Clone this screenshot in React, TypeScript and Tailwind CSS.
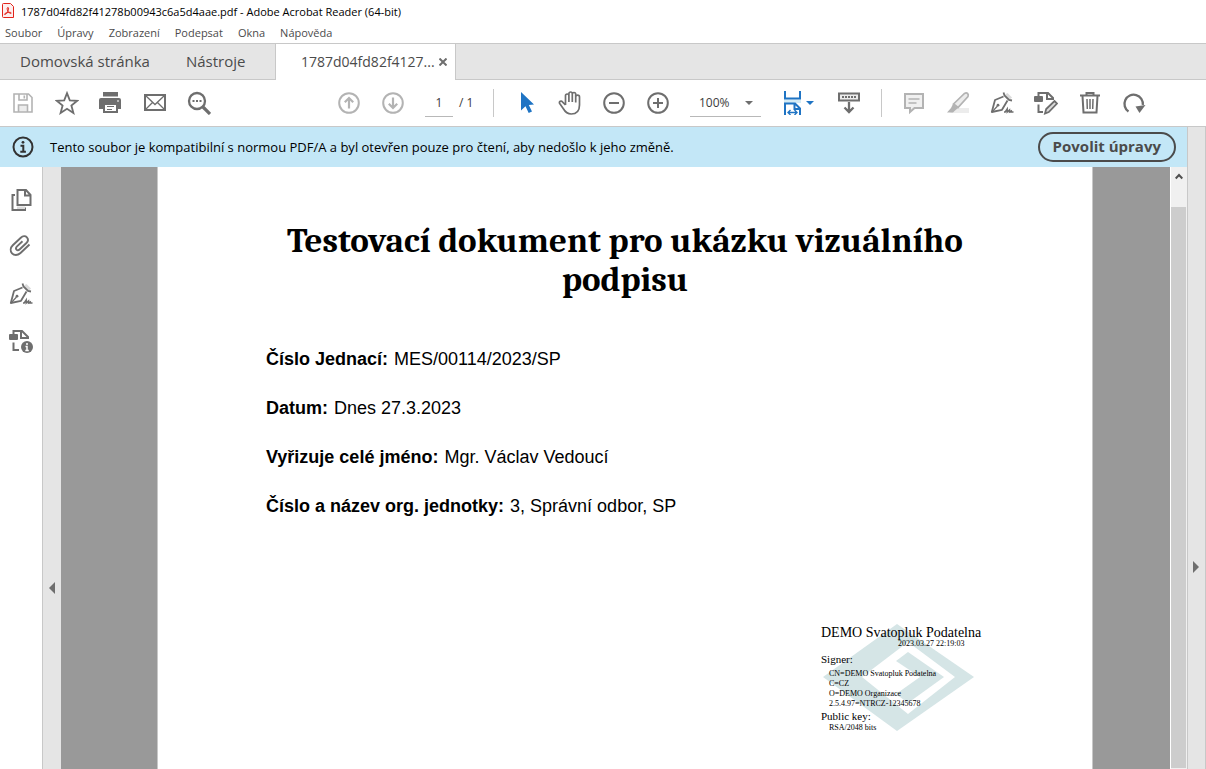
import { useState } from "react";
import type { ReactNode } from "react";

const MENU = ["Soubor", "Úpravy", "Zobrazení", "Podepsat", "Okna", "Nápověda"];

const FIELDS = [
  { label: "Číslo Jednací:", value: "MES/00114/2023/SP" },
  { label: "Datum:", value: "Dnes 27.3.2023" },
  { label: "Vyřizuje celé jméno:", value: "Mgr. Václav Vedoucí" },
  { label: "Číslo a název org. jednotky:", value: "3, Správní odbor, SP" },
];

const CERT_LINES = ["CN=DEMO Svatopluk Podatelna", "C=CZ", "O=DEMO Organizace", "2.5.4.97=NTRCZ-12345678"];

function Icon({ children, className = "" }: { children: ReactNode; className?: string }) {
  return (
    <svg className={`w-6 h-6 shrink-0 ${className}`} viewBox="0 0 24 24" fill="none" stroke="currentColor" strokeWidth={2}>
      {children}
    </svg>
  );
}

function ToolButton({ label, disabled, children }: { label: string; disabled?: boolean; children: ReactNode }) {
  return (
    <button
      type="button"
      aria-label={label}
      disabled={disabled}
      className="flex w-11 h-full shrink-0 items-center justify-center text-[#6e6e6e] disabled:text-[#b3b3b3]"
    >
      <Icon>{children}</Icon>
    </button>
  );
}

function SignShape() {
  return (
    <>
      <path d="M15 3.5l2.500-1.500L22 6.500 19.500 9z" fill="#dcdcdc" stroke="none" />
      <path d="M13.500 1.500l1 3 4.500 4.500 3 .5" strokeWidth={1.800} />
      <path d="M13.500 5.500l-8.500 3.500L1.800 21l10.200-2.200L17.500 9.500" strokeWidth={1.800} strokeLinejoin="round" />
      <path d="M2 21l5.500-6" strokeWidth={1.200} />
      <circle cx="8" cy="14.200" r="1.400" fill="currentColor" stroke="none" />
      <path d="M14 21h1.200l2-3v3l2.300-2v2l1.800-1v1H23.500" strokeWidth={1.500} />
    </>
  );
}

function Toolbar() {
  const [page, setPage] = useState("1");

  return (
    <div className="flex h-[47px] shrink-0 items-center border-b border-[#c8c8c8] bg-white pl-px">
      <ToolButton label="Uložit" disabled>
        <path d="M7 14h10v7H7z" fill="#ececec" stroke="none" />
        <path d="M3 3h14.5L21 6.5V21H3zM8 3v6h8V3M7.500 21v-7h9v7" strokeWidth={1.6} />
        <path d="M13.300 4.500v3" strokeWidth={1.6} />
      </ToolButton>
      <ToolButton label="Oblíbené">
        <path d="M12 2.200l2.800 7.200 7.400.4-5.800 4.800 2 7.400-6.400-4.200L5.600 22l2-7.400-5.800-4.800 7.400-.4z" strokeWidth={1.8} />
      </ToolButton>
      <ToolButton label="Tisk">
        <path d="M4 1h15v4.500H4z" fill="currentColor" stroke="none" />
        <path d="M0 9a2 2 0 012-2h18a2 2 0 012 2v9h-3v4H4v-4H0z" fill="currentColor" stroke="none" />
        <path d="M6 14h11v6H6z" fill="white" stroke="none" />
        <path d="M8 15.500h7M8 18.500h5" strokeWidth={1.200} />
        <path d="M18 10h2" stroke="white" strokeWidth={1.200} />
      </ToolButton>
      <ToolButton label="E-mail">
        <path d="M2 4h20v15H2z" />
        <path d="M2.500 4.500L12 13.500l9.500-9M2.500 18.500l7-7M21.500 18.500l-7-7" strokeWidth={1.300} />
      </ToolButton>
      <ToolButton label="Hledat">
        <circle cx="10" cy="10" r="8" strokeWidth={2.300} />
        <path d="M16 16l7 7" strokeWidth={3.200} />
        <path d="M5.500 10h2M9 10h2M12.500 10h2" />
      </ToolButton>

      <div className="ml-[106px] flex h-full items-center">
        <ToolButton label="Předchozí stránka" disabled>
          <circle cx="12" cy="12" r="9.800" />
          <path d="M12 17.500V7.500M7.800 11.200L12 7l4.200 4.200" strokeWidth={2.200} />
        </ToolButton>
        <ToolButton label="Další stránka" disabled>
          <circle cx="12" cy="12" r="9.800" />
          <path d="M12 6.500v10M7.800 12.800L12 17l4.200-4.200" strokeWidth={2.200} />
        </ToolButton>
      </div>

      <input
        aria-label="Stránka"
        value={page}
        onChange={(e) => setPage(e.target.value)}
        className="ml-[10px] h-7 w-7 border-b border-[#b8b8b8] text-center text-xs text-[#3c3c3c] outline-none"
      />
      <span className="ml-1.5 w-[34px] text-xs text-[#3c3c3c]">/ 1</span>
      <div className="h-7 w-px bg-[#c8c8c8]" />

      <div className="ml-[10px] flex h-full items-center">
        <ToolButton label="Výběr">
          <path d="M7 1v18.500l4.500-4.300 3.200 6.800 3.300-1.500-3.200-6.500 5.200-.5z" fill="#1f74c4" stroke="none" />
        </ToolButton>
        <ToolButton label="Ruka">
          <path
            d="M7.500 14V4.700a1.700 1.700 0 013.400 0V11M10.900 11V2.700a1.700 1.700 0 013.400 0V11M14.300 11V3.200a1.700 1.700 0 013.400 0V11.500M17.700 11.500V6a1.900 1.900 0 013.800 0V14c0 5.500-3 9-8.300 9-4.200 0-6-2-8-5.500L1.700 12.500c-1-2 1.500-3.200 2.700-1.700L7.500 14"
            strokeWidth={1.700}
            strokeLinejoin="round"
          />
        </ToolButton>
        <ToolButton label="Zmenšit">
          <circle cx="12" cy="12" r="9.800" />
          <path d="M7 12h10" />
        </ToolButton>
        <ToolButton label="Zvětšit">
          <circle cx="12" cy="12" r="9.800" />
          <path d="M7 12h10M12 7v10" />
        </ToolButton>
      </div>

      <div className="relative ml-[10px]">
        <select
          aria-label="Přiblížení"
          defaultValue="100%"
          className="h-7 w-[71px] appearance-none border-b border-[#b8b8b8] bg-transparent pl-[9px] text-xs text-[#3c3c3c]"
        >
          <option>50%</option>
          <option>100%</option>
          <option>200%</option>
        </select>
        <svg className="pointer-events-none absolute right-2 top-3 h-1 w-2" viewBox="0 0 8 4" fill="#6e6e6e">
          <path d="M0 0h8L4 4z" />
        </svg>
      </div>

      <button type="button" aria-label="Přizpůsobit šířce" className="ml-[19px] flex h-full w-9 shrink-0 items-center gap-0.5 text-[#1f74c4]">
        <Icon>
          <path d="M4 8.500h17v3.500H4z" fill="#d4ebf5" stroke="none" />
          <path d="M5 0v7.500h15V0" />
          <path d="M5 24V12.500h10l5 5V24M14.500 13v5H20" />
          <path d="M8 21.500h9M10.500 19l-2.500 2.500 2.500 2.500M14.500 19l2.500 2.500-2.500 2.500" strokeWidth={1.400} />
        </Icon>
        <svg className="h-1 w-2 shrink-0" viewBox="0 0 8 4" fill="currentColor">
          <path d="M0 0h8L4 4z" />
        </svg>
      </button>
      <div className="ml-[11px] flex h-full items-center">
        <ToolButton label="Lišta nástrojů">
          <path d="M2 2.500h20v7H2z" fill="#ececec" />
          <path d="M5 6h14" strokeDasharray="2 1" />
          <path d="M12 11v9.500M7.500 16.500l4.500 4.500 4.500-4.500" strokeWidth={2.300} />
        </ToolButton>
      </div>
      <div className="ml-[10px] h-7 w-px bg-[#c8c8c8]" />

      <div className="ml-[10px] flex h-full items-center">
        <ToolButton label="Poznámka" disabled>
          <path d="M3 3h18v14h-8.500L8 21v-4H3z" fill="#f0f0f0" />
          <path d="M6.500 8h11M6.500 12h8" strokeWidth={1.300} />
        </ToolButton>
        <ToolButton label="Zvýraznit" disabled>
          <path d="M9 17h14v5H4z" fill="#ececec" stroke="none" />
          <path d="M7.500 13L18.500 2.500c2.500-1.500 4.500.5 3.500 3L12 16.500z" fill="#ececec" strokeWidth={1.700} />
          <path d="M7 13l5 4-3.500 3L7 21.500H1L5 17z" fill="currentColor" stroke="none" />
        </ToolButton>
        <ToolButton label="Podepsat">
          <SignShape />
        </ToolButton>
        <ToolButton label="Upravit PDF">
          <path d="M0 6a1 1 0 011-1h7a1 1 0 011 1v4a1 1 0 01-1 1H1a1 1 0 01-1-1z" fill="currentColor" stroke="none" />
          <path d="M4.500 5V2h9.500l5 5v2M13 2v6h6M4.500 13.500V21H9" />
          <path d="M11 22.500l1.200-4.500L20.500 10l2.500 2.500-8.200 8.500z" fill="#dcdcdc" strokeWidth={1.800} />
        </ToolButton>
        <ToolButton label="Odstranit">
          <path d="M2 4.500h20M8.500 4V2h7v2M4.500 5l1 16.500h13l1-16.500" />
          <path d="M9 8l.3 10M12 8v10M15 8l-.3 10" strokeWidth={1.500} />
        </ToolButton>
        <ToolButton label="Otočit">
          <path d="M6.500 20.500a9.200 9.200 0 1114.300-6.500" strokeWidth={2.300} />
          <path d="M13.500 15.500l10-1.500-6 8z" fill="currentColor" stroke="none" />
        </ToolButton>
      </div>
    </div>
  );
}

function Sidebar() {
  return (
    <aside className="flex w-[42px] shrink-0 flex-col items-center gap-[23px] bg-white pr-px pt-[21px] text-[#6e6e6e]">
      <button type="button" aria-label="Miniatury stránek">
        <Icon>
          <path d="M8.500 2H17l4.500 5v10h-13zM16 2v5.500h5.500" />
          <path d="M6 7H3.500v15H16v-2.500" />
          <path d="M8 18.500h8V21H8z" fill="#dcdcdc" stroke="none" />
        </Icon>
      </button>
      <button type="button" aria-label="Přílohy">
        <Icon>
          <path
            d="M20.500 9.500l-9 8.500c-3 2.800-6.500 2.500-8.500.3-2-2.300-1.700-5.600.8-8l8-7.600c2-1.800 4.600-2 6.100-.4 1.500 1.700 1.300 3.900-.5 5.700l-6.600 6.300c-1.200 1.100-2.500 1.200-3.300.4-.8-.9-.6-2.200.5-3.300l5.500-5.200"
            strokeWidth={1.900}
          />
        </Icon>
      </button>
      <button type="button" aria-label="Podpisy">
        <Icon>
          <SignShape />
        </Icon>
      </button>
      <button type="button" aria-label="Standardy">
        <Icon>
          <path d="M0 6a1 1 0 011-1h7a1 1 0 011 1v4a1 1 0 01-1 1H1a1 1 0 01-1-1z" fill="currentColor" stroke="none" />
          <path d="M4.500 5V2h8.500l6 6v2M12 2v7h6.500M4.500 13.500V21H10" />
          <circle cx="18" cy="18" r="6" fill="currentColor" stroke="none" />
          <path d="M18 14v2M16.500 17.500H18v4M16.300 21.500h3.500" stroke="white" strokeWidth={1.500} />
        </Icon>
      </button>
    </aside>
  );
}

function Signature() {
  return (
    <div className="relative isolate ml-auto mr-[5px] w-[158px] whitespace-nowrap pt-px font-['Liberation_Serif',serif] text-black">
      <svg className="absolute left-0 top-0 -z-10 h-[108px] w-[154px]" viewBox="0 0 154 108" fill="#d5e5e6">
        <path fillRule="evenodd" d="M2 53L76 0l77 53-77 54zM41 53l46 37 47-37-47-35z" />
        <path d="M75 37l12-9 36 25-36 26-12-9 24-17z" />
      </svg>
      <div className="text-[14px] leading-4">DEMO Svatopluk Podatelna</div>
      <div className="pl-[77px] text-[8px] leading-[6px]">2023.03.27 22:19:03</div>
      <div className="mt-[5px] text-[11px] leading-[14px]">Signer:</div>
      <div className="mt-[3px] pl-2 text-[8px] leading-[10px]">
        {CERT_LINES.map((line) => (
          <div key={line}>{line}</div>
        ))}
      </div>
      <div className="text-[11px] leading-[14px]">Public key:</div>
      <div className="pl-2 text-[8px] leading-[10px]">RSA/2048 bits</div>
    </div>
  );
}

export default function App() {
  return (
    <div className="flex min-h-screen flex-col bg-white font-['Open_Sans',sans-serif] text-[#4b4b4b]">
      <header className="flex h-[22px] shrink-0 items-center gap-[7px] pl-0.5">
        <svg className="h-4 w-3" viewBox="0 0 12 16" fill="none" stroke="#e2231a">
          <path d="M1.500.500h7l3 3v11h-10a1 1 0 01-1-1v-12a1 1 0 011-1z" fill="#fdeeee" />
          <path d="M6 4.500c1.200 0 .3 3.500-1.200 5.500-1 1.500-2.300 2-2.400 1.200-.1-.9 3.600-2 5.500-1.900 1.500.1 1.800 1.300.7 1.200C7 10.400 4.800 7 5.200 5.200c.1-.5.400-.7.800-.7z" />
        </svg>
        <h1 className="pt-0.5 text-[11px] text-black">1787d04fd82f41278b00943c6a5d4aae.pdf - Adobe Acrobat Reader (64-bit)</h1>
      </header>

      <nav className="flex h-[21px] shrink-0 items-center gap-[15px] pl-[5px] pt-0.5 text-[11px]">
        {MENU.map((item) => (
          <button key={item} type="button">
            {item}
          </button>
        ))}
      </nav>

      <div className="flex h-[37px] shrink-0 border-t border-[#c8c8c8] bg-[#e5e5e5] text-[15px]">
        <div className="flex w-[276px] items-center gap-9 border-b border-r border-[#c8c8c8] pl-5">
          <button type="button">Domovská stránka</button>
          <button type="button">Nástroje</button>
        </div>
        <div className="flex w-[179px] items-center gap-1 bg-white pl-[25px]">
          <button type="button" className="text-sm">
            1787d04fd82f4127...
          </button>
          <button type="button" aria-label="Zavřít kartu">
            <svg className="h-2 w-2" viewBox="0 0 8 8" stroke="#6e6e6e" strokeWidth={2}>
              <path d="M.500.500l7 7M7.500.500l-7 7" />
            </svg>
          </button>
        </div>
        <div className="flex-1 border-b border-l border-[#c8c8c8]" />
      </div>

      <Toolbar />

      <div className="flex flex-1">
        <div className="flex min-w-0 flex-1 flex-col">
          <div className="flex h-10 shrink-0 items-center bg-[#c3e7f7] pl-[11px] pr-[11px]">
            <Icon className="text-[#323232]">
              <circle cx="12" cy="12" r="9.500" />
              <circle cx="12" cy="7.300" r="1.400" fill="currentColor" stroke="none" />
              <path d="M9.500 10.800H12.300V16.500M9.300 16.700h5.600" />
            </Icon>
            <p className="ml-[15px] flex-1 pt-px text-[13px] text-black">
              Tento soubor je kompatibilní s normou PDF/A a byl otevřen pouze pro čtení, aby nedošlo k jeho změně.
            </p>
            <button type="button" className="h-[30px] shrink-0 rounded-full border-2 border-[#4b4b4b] px-[13px] pb-px text-[15px] font-bold leading-none">
              Povolit úpravy
            </button>
          </div>

          <div className="flex flex-1">
            <Sidebar />
            <button
              type="button"
              aria-label="Skrýt navigační podokno"
              className="flex w-[19px] shrink-0 justify-center border-l border-[#c8c8c8] bg-[#e5e5e5] pt-[415px]"
            >
              <svg className="h-3 w-1.5" viewBox="0 0 6 12" fill="#6e6e6e">
                <path d="M6 0v12L0 6z" />
              </svg>
            </button>
            <main className="flex flex-1 bg-[#999999] pl-24 pr-[77px]">
              <article className="flex-1 border-x border-[#c8c8c8] bg-white px-[108px] pt-[54px] text-black">
                <h2 className="text-center font-[Cambria,'Liberation_Serif',serif] text-[35px] font-bold leading-[39px]">
                  Testovací dokument pro ukázku vizuálního podpisu
                </h2>
                <dl className="mt-[50px] flex flex-col gap-[29px] font-['Liberation_Sans',sans-serif] text-lg leading-5">
                  {FIELDS.map((f) => (
                    <div key={f.label} className="flex gap-1.5">
                      <dt className="font-bold">{f.label}</dt>
                      <dd>{f.value}</dd>
                    </div>
                  ))}
                </dl>
                <div className="mt-[108px]">
                  <Signature />
                </div>
              </article>
            </main>
            <div className="flex w-[17px] shrink-0 flex-col border-l border-white bg-[#f0f0f0]">
              <button type="button" aria-label="Posunout nahoru" className="flex h-10 justify-center pt-1.5">
                <svg className="h-[7px] w-2" viewBox="0 0 8 7" fill="none" stroke="#505050" strokeWidth={2}>
                  <path d="M.700 5.500L4 2l3.300 3.500" />
                </svg>
              </button>
              <div className="mb-px mr-px flex-1 bg-[#cdcdcd]" />
            </div>
          </div>
        </div>
        <button
          type="button"
          aria-label="Zobrazit podokno nástrojů"
          className="flex w-[19px] shrink-0 justify-center border-x border-[#c8c8c8] bg-[#e5e5e5] pr-px pt-[434px]"
        >
          <svg className="h-3 w-1.5" viewBox="0 0 6 12" fill="#6e6e6e">
            <path d="M0 0v12l6-6z" />
          </svg>
        </button>
      </div>
    </div>
  );
}
